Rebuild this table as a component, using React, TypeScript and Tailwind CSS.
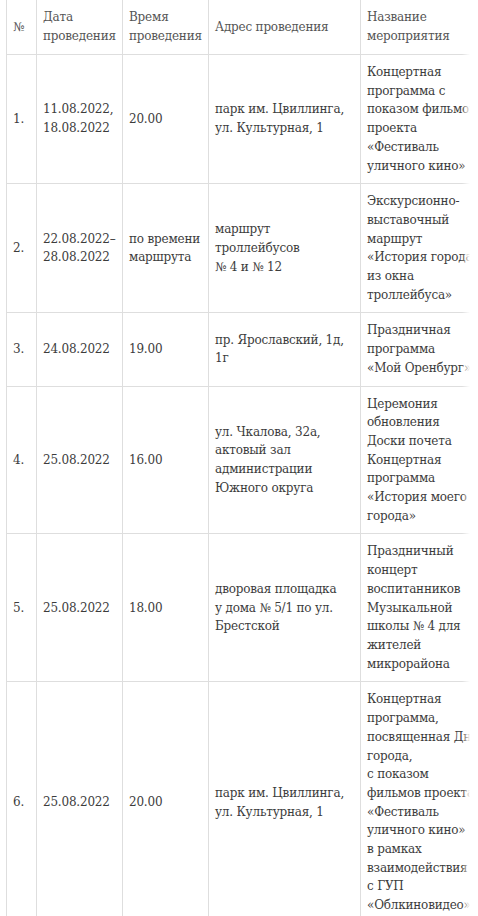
import React from 'react';

type Row = {
  num: string;
  date: string[];
  time: string[];
  place: string[];
  title: string[];
};

const rows: Row[] = [
  {
    num: '1.',
    date: ['11.08.2022,', '18.08.2022'],
    time: ['20.00'],
    place: ['парк им. Цвиллинга,', 'ул. Культурная, 1'],
    title: ['Концертная', 'программа с', 'показом фильмов', 'проекта', '«Фестиваль', 'уличного кино»'],
  },
  {
    num: '2.',
    date: ['22.08.2022–', '28.08.2022'],
    time: ['по времени', 'маршрута'],
    place: ['маршрут', 'троллейбусов', '№ 4 и № 12'],
    title: ['Экскурсионно-', 'выставочный', 'маршрут', '«История города', 'из окна', 'троллейбуса»'],
  },
  {
    num: '3.',
    date: ['24.08.2022'],
    time: ['19.00'],
    place: ['пр. Ярославский, 1д,', '1г'],
    title: ['Праздничная', 'программа', '«Мой Оренбург»'],
  },
  {
    num: '4.',
    date: ['25.08.2022'],
    time: ['16.00'],
    place: ['ул. Чкалова, 32а,', 'актовый зал', 'администрации', 'Южного округа'],
    title: ['Церемония', 'обновления', 'Доски почета', 'Концертная', 'программа', '«История моего', 'города»'],
  },
  {
    num: '5.',
    date: ['25.08.2022'],
    time: ['18.00'],
    place: ['дворовая площадка', 'у дома № 5/1 по ул.', 'Брестской'],
    title: ['Праздничный', 'концерт', 'воспитанников', 'Музыкальной', 'школы № 4 для', 'жителей', 'микрорайона'],
  },
  {
    num: '6.',
    date: ['25.08.2022'],
    time: ['20.00'],
    place: ['парк им. Цвиллинга,', 'ул. Культурная, 1'],
    title: [
      'Концертная',
      'программа,',
      'посвященная Дню',
      'города,',
      'с показом',
      'фильмов проекта',
      '«Фестиваль',
      'уличного кино»',
      'в рамках',
      'взаимодействия',
      'с ГУП',
      '«Облкиновидео»',
    ],
  },
];

const Lines = ({ lines }: { lines: string[] }) => (
  <>
    {lines.map((l, i) => (
      <div key={i} className="whitespace-nowrap">{l}</div>
    ))}
  </>
);

const cell = 'border border-[#dedede] px-[6px] py-[8px] align-middle text-left overflow-hidden';

export default function App() {
  return (
    <div className="min-h-[916px] bg-white pl-[6px] overflow-hidden" style={{ fontFamily: '"DejaVu Serif", "Liberation Serif", serif' }}>
      <div className="relative w-[464px] overflow-hidden -mt-px">
        <table className="table-fixed w-[504px] border-collapse text-[12px] leading-[18.7px] text-[#3c3c3c] tracking-[-0.2px]">
          <colgroup>
            <col className="w-[30px]" />
            <col className="w-[86px]" />
            <col className="w-[86px]" />
            <col className="w-[152px]" />
            <col className="w-[150px]" />
          </colgroup>
          <thead>
            <tr className="text-[#555555] h-[55px]">
              <th className={`${cell} font-normal`}>№</th>
              <th className={`${cell} font-normal`}><Lines lines={['Дата', 'проведения']} /></th>
              <th className={`${cell} font-normal`}><Lines lines={['Время', 'проведения']} /></th>
              <th className={`${cell} font-normal`}><Lines lines={['Адрес проведения']} /></th>
              <th className={`${cell} font-normal`}><Lines lines={['Название', 'мероприятия']} /></th>
            </tr>
          </thead>
          <tbody>
            {rows.map(r => (
              <tr key={r.num}>
                <td className={cell}>{r.num}</td>
                <td className={cell}><Lines lines={r.date} /></td>
                <td className={cell}><Lines lines={r.time} /></td>
                <td className={cell}><Lines lines={r.place} /></td>
                <td className={cell}><Lines lines={r.title} /></td>
              </tr>
            ))}
          </tbody>
        </table>
        <div className="absolute top-0 right-0 h-full w-[8px] bg-gradient-to-r from-white/0 to-white" />
      </div>
    </div>
  );
}
